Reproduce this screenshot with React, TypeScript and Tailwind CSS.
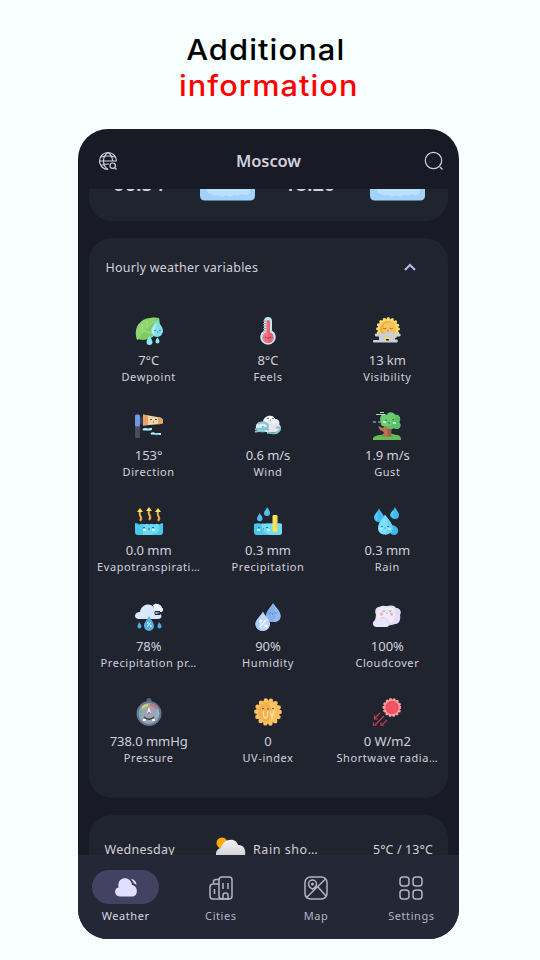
import React from "react";

const Dewpoint = () => (
  <>
    <path d="M2 23C-2 12 4 2 15 1c4-.7 7-.3 9 0 2 8 0 16-8 20-5 2.500-10 1.500-12 1z" fill="#8fd56f" />
    <path d="M2 22C7 13 13 7 23 1c2 9-2 17-9 20-4 2-8 2-11 1z" fill="#7fca62" />
    <path d="M2 22C8 14 13 9 20 4M8 15l-1-8M12 11V4M9 14l8 2" fill="none" stroke="#a9e283" strokeWidth="1" />
    <path d="M22 2.500c2 4 6 7 6 11.500a6 6 0 0 1-12 0c0-4 4-7 6-11.500z" fill="#80dfec" />
    <path d="M21 6c-2 3-4 5-4 8 0 2 1 3 2 4z" fill="#b0f1f4" />
    <path d="M14.500 19c1 2 3 4 3 6a3 3 0 0 1-6 0c0-2 2-4 3-6zM22.500 20.500c1 1.500 2 2.500 2 4a2 2 0 0 1-4 0c0-1.500 1-2.500 2-4z" fill="#8ce9f3" />
    <path d="M19 13l1 .7 1-.4M24 13l1 .7 1-.7M22 15h1.500" fill="none" stroke="#37646e" strokeWidth=".8" />
  </>
);
const Feels = () => (
  <>
    <path d="M10 4a4 4 0 0 1 8 0v9.500a7.700 7.700 0 1 1-8 0z" fill="#c1e5ef" />
    <path d="M12.500 4a2 2 0 0 1 3.500 0v12.500h-3.500z" fill="#eb6471" />
    <circle cx="14" cy="20.500" r="5.500" fill="#f36e80" />
    <path d="M14 15a5.500 5.500 0 0 1 0 11z" fill="#e65f74" />
    <path d="M9 4h3M9 6.500h3M9 9h3M9 11.500h3M9 14h3" stroke="#8b9ba8" strokeWidth="1" />
    <path d="M11 20l1.200.5M15.800 20.500L17 20M13 21h2" stroke="#62323e" strokeWidth=".9" />
  </>
);
const Visibility = () => (
  <>
    <circle cx="15" cy="12" r="10.500" fill="#f8db63" stroke="#f8dc68" strokeWidth="3" strokeLinecap="round" strokeDasharray="0 4.123" />
    <circle cx="15" cy="12" r="8" fill="#f0a850" />
    <circle cx="16.200" cy="12" r="6.800" fill="#fac45e" />
    <path d="M10 11l2 1 1.500-1M16.500 11l2 1 1.500-1M14 14h2" fill="none" stroke="#99632c" strokeWidth=".9" />
    <path d="M3 16.500h10c-1-2 5-3 6 0h7.500c1.500 0 1.500 3 0 3H22v3h2c1 0 1 3 0 3H1c-1.500 0-1.500-2.500 0-2.500h5v-3.500H3c-1.500 0-1.500-3 0-3z" fill="#c7cfdf" />
    <path d="M12 20h5v3.500h-5z" fill="#f8d958" />
    <path d="M13 22h3v1.500h-3z" fill="#292a34" />
  </>
);
const Direction = () => (
  <>
    <rect y="3" width="5" height="23" rx="1.500" fill="#484c62" />
    <rect y="2.500" width="5" height="12" rx="1.500" fill="#7397df" />
    <path d="M5 5l3-1v9l-3-1z" fill="#343c5d" />
    <path d="M8 2.500l17 3c4 1 4 6 1 6.500L8 13.500z" fill="#f1d6a8" />
    <path d="M8 2.500l5 1v9.500l-5 .5zM23 5.200l2 .3c4 1 4 6 1 6.500l-3 .3z" fill="#e9a06a" />
    <path d="M15 8l1-1 1 1M20 8l1-1 1 1M18 10h1" fill="none" stroke="#513d36" strokeWidth=".9" />
    <path d="M8 18c3-3 4 1 7-1h2M16 22c3-2 4 1 6 0h4" fill="none" stroke="#b7eefa" strokeWidth="2" />
    <path d="M9 18.500h7M18 22.500h6" stroke="#4ca6d3" strokeWidth=".7" />
  </>
);
const Wind = () => (
  <>
    <path d="M2 16c-1-4 3-7 7-6 0-6 9-9 12-3 4 0 5 4 4 5 4 4 1 8-3 8H7c-3 0-5-2-5-4z" fill="#e4e8ed" />
    <path d="M10 9c2-5 8-8 11-2 4 0 5 4 4 5-4-1-9 1-15-3z" fill="#f0f2f5" />
    <path d="M13 6l1 .7 1-.7M18 6l1 .7 1-.7M16 8h1" fill="none" stroke="#4c4e59" strokeWidth=".8" />
    <path d="M4 12c4-3 10-1 10 2 0 3-6 3-5 0M1 17.500c5-2 9 0 14 0M1 20c4-2 7 0 10-1M13 21c4-1 8 2 11-1 4-3 1-6-2-4" fill="none" stroke="#7bc4d0" strokeWidth="1.900" />
  </>
);
const Gust = () => (
  <>
    <path d="M0 28v-2c2-3 8-3 12-4 5-1 8 0 11 1 4 0 5 2 5 5z" fill="#61be52" />
    <path d="M5 14l5 2 3-5h6l-1 12 2 2H9l2-5-4-2z" fill="#b77354" />
    <path d="M14 15l4-4v13h-3z" fill="#a0604a" />
    <path d="M8 10C5 5 10 0 14 3c1-4 7-3 8 0 4-1 7 4 4 7 4 4-1 9-5 6-3 2-7 1-8-2-4 1-6-1-5-4z" fill="#6bcd72" />
    <path d="M22 3c4-1 7 4 4 7 4 4-1 9-5 6-3 2-7 1-8-2 6 1 10-3 9-11z" fill="#5bbf69" />
    <path d="M12 8l2 .5M19 8l2-.5M15 11h2" stroke="#26683f" strokeWidth=".9" />
    <path d="M3 2.500h9M7 .5h4M0 10h3M5 10h3" stroke="#cce6dd" strokeWidth=".9" />
    <path d="M10 10h3M20 11h3" stroke="#d4fff1" strokeWidth="1.400" />
  </>
);
const Evapo = () => (
  <>
    <path d="M5 14c4-4-2-4 0-9M14 13c4-4-2-5 0-9M23 14c4-4-2-4 0-9" fill="none" stroke="#d69c32" strokeWidth="2.200" />
    <path d="M5 13c3-3-2-4 0-8M14 12c3-3-2-4 0-8M23 13c3-3-2-4 0-8" fill="none" stroke="#fac94b" strokeWidth="1" />
    <path d="M2 5l3-4 3 4zM11 4l3-4 3 4zM20 5l3-4 3 4z" fill="#fae253" />
    <path d="M0 16q3 0 4 1.500 3-1.500 5 0 3-1.500 5 0 3-1.500 5 0 3-1.500 5 0 2-1.500 4-1.500v9c0 2-1 3-3 3H3c-2 0-3-1-3-3z" fill="#4bc8ee" />
    <path d="M8 17.500q3-.5 6 0 3-1 5 0 3-1 5 0v6c-2 4-6 2-7 4.500H8z" fill="#6cdaf6" />
    <path d="M8 20l1 1 1-1M17 20l1 1 1-1M13 22h2" fill="none" stroke="#28617b" strokeWidth=".9" />
    <path d="M8 23h3M17 23h3" stroke="#d8ffff" strokeWidth="2" />
  </>
);
const Precip = () => (
  <>
    <path d="M0 17q3-1 6-.5t6 0 6 0 6 0 4 .5v8c0 2-1 3-3 3H3c-2 0-3-1-3-3z" fill="#48c7ed" />
    <path d="M8 16.500q5 .5 10 0t10 .5v8c0 2-1 3-3 3h-9c-6-2-9-5-8-11.500z" fill="#73dcf3" />
    <rect x="18.500" y="8" width="5" height="17" rx="1" fill="#f5e458" />
    <path d="M21.500 11h2M21.500 14h2M21.500 17h2M21.500 20h2" stroke="#dbb94d" strokeWidth=".7" />
    <path d="M13 0c2 3 3 4 3 6a3 3 0 0 1-6 0c0-2 2-3 3-6zM5.500 6c2 3 3 4 3 5.500a2.700 2.700 0 0 1-5.500 0C3 9.500 5 8 5.500 6z" fill="#4dbff0" />
    <path d="M4 20l1 1 1-1M12 20l1 1 1-1M9 22h1" fill="none" stroke="#28728c" strokeWidth=".9" />
    <path d="M3 23h3M13 23h3" stroke="#ddfff9" strokeWidth="1.500" />
  </>
);
const Rain = () => (
  <>
    <path d="M6 1c1 4 5 6 5 9s-2 5-5 5-5-2-5-5 4-5 5-9zM22 0c1 3 4 5 4 8s-2 4-4 4-5-2-5-4 4-5 5-8zM19 18c4 1 7 3 6 7-1 4-7 4-8 0z" fill="#40b9eb" />
    <path d="M4.500 6c-2 3-2 5 0 7M20.500 4c-2 3-2 4 0 6" fill="none" stroke="#59cbf2" strokeWidth="2" />
    <path d="M12 7.500c2 4 7.500 8 7.500 13.500 0 4-3 6.500-7.500 6.500S5 25 5 21C5 15 10 12 12 7.500z" fill="#7edff8" />
    <path d="M12 7.500c2 4 7.500 8 7.500 13.500 0 4-3 6.500-7.500 6.500 4-6 3-13 0-20z" fill="#6cd2f3" />
    <path d="M8 19l1 1 1-1M14 19l1 1 1-1M11.500 21h1" fill="none" stroke="#30687e" strokeWidth=".8" />
    <path d="M6.500 22h3M15 22h3" stroke="#cfffff" />
  </>
);
const Probability = () => (
  <>
    <path d="M4 16c-6 0-5-7 1-7 1-8 11-10 14-4 1-5 7-5 8 0 2 1 1 4-1 4l-6 1 5 1c3 2 1 5-2 5z" fill="#dae8ff" />
    <path d="M18 2.500c1-3 7-2 8 2 4 1 2 4 0 4h-6z" fill="#eaf2ff" />
    <path d="M20 8.500h5M20 8.500v3h5" fill="none" stroke="#20242f" strokeWidth="1" />
    <path d="M14 13c2 4 5 6 5 10a5 5 0 0 1-10 0c0-4 3-6 5-10z" fill="#56aee9" />
    <path d="M4 19c2 3 2.500 3 2.500 4.500a2 2 0 0 1-4 0C2.500 22 3.500 21 4 19zM24 19c2 3 2.500 3 2.500 4.500a2 2 0 0 1-4 0c0-1.500 1-2.500 1.500-4.500z" fill="#50abe5" />
    <path d="M12 24l4-5" stroke="white" strokeWidth="1" />
    <path d="M12 20h1.500M15 23h1.500" stroke="white" strokeWidth="1.500" />
  </>
);
const Humidity = () => (
  <>
    <path d="M19 0c3 5 7.500 8 7.500 13 0 4-3 6-7.500 6s-7-2-7-6c0-5 4-8 7-13z" fill="#86aee8" />
    <path d="M19 0c3 5 7.500 8 7.500 13 0 4-3 6-7.500 6 4-6 3-12 0-19z" fill="#94bbf2" />
    <path d="M9 8.500c2 5 7 7.500 7 12.500 0 4-3 7-7 7s-7.500-3-7.500-7C1.500 16 7 13.500 9 8.500z" fill="#bcd9ff" />
    <path d="M9 8.500C7 13.500 5 17 5 22c0 3 2 5 4 6-4 0-7.500-3-7.500-7 0-5 5.500-7.500 7.500-12.500z" fill="#a6cdfb" />
    <path d="M14.500 9.500l1 1 1-1M21 9.500l1 1 1-1M18 11h1" fill="none" stroke="#46597b" strokeWidth=".7" />
    <path d="M6 24l6-7" stroke="white" strokeWidth="1.500" />
    <circle cx="6.500" cy="18" r="1.500" fill="white" />
    <circle cx="12" cy="23" r="1.500" fill="white" />
  </>
);
const Clouds = () => (
  <>
    <path d="M3 12C1 8 3 4 6 4c3-2 6-1 8-1 3-1 8-1 9 2 4 0 6 4 4 7 1 5-1 9-5 9-4 2-12 2-16-1-3-2-4-5-3-8z" fill="#e4dcf7" />
    <path d="M5 7c2-4 6-3 8-2 5-2 8 0 9 4 1 5-1 9-4 11H7C3 17 3 11 5 7z" fill="#f0ebfa" />
    <path d="M2 17c0-3 4-4 7-2 3-1 5 1 5 3 3 1 3 5 0 6H3c-4-1-4-5-1-7z" fill="#e9e5fc" />
    <path d="M8 15c3-1 6 0 6 3 2 1 3 3 1 5" fill="none" stroke="#cfc7ea" strokeWidth=".8" />
    <path d="M10 7.500l1 1 1-1M16 7.500l1 1 1-1M13.500 10h1" fill="none" stroke="#514a60" strokeWidth=".8" />
    <circle cx="8.500" cy="11" r="1.700" fill="#f5b0b4" />
    <circle cx="18.500" cy="11" r="1.700" fill="#f5b0b4" />
  </>
);
const Pressure = () => (
  <>
    <circle cx="14" cy="2.500" r="2.500" fill="#59637d" />
    <circle cx="14" cy="15.500" r="12.500" fill="#67758f" />
    <circle cx="14" cy="15.500" r="10.500" fill="#9ca5b3" />
    <path d="M6 19a8 8 0 0 1 0-7" fill="none" stroke="#57bbaa" strokeWidth="1.800" />
    <path d="M7 10q3-3 6-3" fill="none" stroke="#e2d657" strokeWidth="1.800" />
    <path d="M15 7q5 0 6.500 4" fill="none" stroke="#dd6977" strokeWidth="1.800" />
    <path d="M22.500 12q1 3 0 7" fill="none" stroke="#83bfd5" strokeWidth="1.800" />
    <path d="M14 9l2 6h-4z" fill="#e8f4fa" />
    <circle cx="14" cy="15" r="1.300" fill="#de6874" />
    <path d="M9 19c3 2.500 7 2.500 10 0M13 21.500h2" stroke="#343b48" strokeWidth="1.200" fill="none" />
    <path d="M8 22h3M17 22h3" stroke="#f0f5ff" strokeWidth="2" />
  </>
);
const Uv = () => (
  <>
    <circle cx="14" cy="14" r="11.700" fill="#f8bb59" stroke="#fbc25f" strokeWidth="4.400" strokeLinecap="round" strokeDasharray="0 5.251" />
    <circle cx="14" cy="14" r="9.800" fill="#f3af50" />
    <path d="M14 4.200a9.800 9.800 0 0 1 0 19.600q7-10 0-19.600z" fill="#fbc564" />
    <path d="M9.500 13v4q0 3 2 3 2 0 2-3v-4M16 13l2 7 2-7" fill="none" stroke="#fde0a0" strokeWidth="1.300" />
    <path d="M8 10l1 1 1-1M18 10l1 1 1-1M13 11h2" fill="none" stroke="#78502c" strokeWidth=".9" />
  </>
);
const Radiation = () => (
  <>
    <circle cx="19" cy="9.500" r="8" fill="#f79397" stroke="#f8a0a2" strokeWidth="3.200" strokeLinecap="round" strokeDasharray="0 3.590" />
    <circle cx="19" cy="9.500" r="6.700" fill="#f05262" />
    <path d="M16 6l6 6M19 5l4 4" stroke="#ee6472" strokeWidth=".8" />
    <path d="M7 15l-5 5M11 18l-9 9M14 22l-5 5" stroke="#c63f52" strokeWidth="1.100" />
    <path d="M1.500 17.500v3.500H5M.500 24.500V28H4M8 24.500V28h3.500" fill="none" stroke="#d44357" strokeWidth="1.100" />
  </>
);

const metrics: { value: string; label: string; icon: React.FC }[] = [
  { value: "7°C", label: "Dewpoint", icon: Dewpoint },
  { value: "8°C", label: "Feels", icon: Feels },
  { value: "13 km", label: "Visibility", icon: Visibility },
  { value: "153°", label: "Direction", icon: Direction },
  { value: "0.6 m/s", label: "Wind", icon: Wind },
  { value: "1.9 m/s", label: "Gust", icon: Gust },
  { value: "0.0 mm", label: "Evapotranspirati…", icon: Evapo },
  { value: "0.3 mm", label: "Precipitation", icon: Precip },
  { value: "0.3 mm", label: "Rain", icon: Rain },
  { value: "78%", label: "Precipitation pr…", icon: Probability },
  { value: "90%", label: "Humidity", icon: Humidity },
  { value: "100%", label: "Cloudcover", icon: Clouds },
  { value: "738.0 mmHg", label: "Pressure", icon: Pressure },
  { value: "0", label: "UV-index", icon: Uv },
  { value: "0 W/m2", label: "Shortwave radia…", icon: Radiation },
];

const WeatherIcon = () => (
  <>
    <path d="M6 21.500c-6 0-6.500-8-1.500-9C2.500 1 17 0 18 10c6 .5 7 11.500 0 11.500z" fill="#e1dfff" />
    <path d="M17 4.200c3 0 5.500 2 5.500 5.600-1-.4-1.600-1.100-2.600-1.500-.6-1.700-1.500-2.900-2.900-4.100z" fill="#e1dfff" />
  </>
);
const CitiesIcon = () => (
  <>
    <rect x="10" y="1" width="13" height="22" rx="3" />
    <path d="M10 8H4Q1 8 1 11v9q0 3 3 3h16M4.500 8V6q0-2.500 2.500-2.500h3M5.500 13v5M14 7v6M19 7v6M14 23v-4q0-2 2.500-2t2.500 2v4" />
  </>
);
const MapIcon = () => (
  <>
    <rect x="1" y="1" width="22" height="22" rx="5.500" />
    <path d="M2 22L21.500 3M14 11l8 9M8.500 13c-2-1-4-3-4-5a4 4 0 0 1 8 0c0 2-2 4-4 5z" />
    <circle cx="8.500" cy="8" r=".8" />
  </>
);
const SettingsIcon = () => (
  <>
    <rect x="1" y="1" width="9" height="9" rx="3" />
    <rect x="14" y="1" width="9" height="9" rx="3" />
    <rect x="1" y="14" width="9" height="9" rx="3" />
    <rect x="14" y="14" width="9" height="9" rx="3" />
  </>
);

const tabs: { label: string; icon: React.FC }[] = [
  { label: "Weather", icon: WeatherIcon },
  { label: "Cities", icon: CitiesIcon },
  { label: "Map", icon: MapIcon },
  { label: "Settings", icon: SettingsIcon },
];

const Wave = () => (
  <svg viewBox="0 0 55 12" className="h-3 w-[55px]">
    <path d="M0 0h55v6.500q0 5-5 5H5q-5 0-5-5z" fill="#a1d2fb" />
    <path d="M7 0h43v4q-4 4-8 1-4 3-8 1-4 3-8 0-4 3-8 0-4 2-7-1-4 0-4-5z" fill="#bddfff" />
  </svg>
);

export default function App() {
  return (
    <div className="flex h-[960px] w-[540px] flex-col bg-[#f7ffff] font-['Noto_Sans',sans-serif]">
      <h1 className="flex h-[129px] shrink-0 flex-col items-center pt-8 pr-[3px] text-center font-['Inter',sans-serif] text-[29px] leading-9 font-[450] tracking-[1px] text-black">
        <span className="-ml-[6px] scale-x-[1.065]">Additional</span>
        <span className="scale-x-[1.060] text-[#ff0000]">information</span>
      </h1>
      <main className="ml-[78px] flex h-[810px] w-[381px] flex-col overflow-hidden rounded-[30px] bg-[#181a26] text-[#d2d0dc]">
        <header className="flex h-[60px] shrink-0 items-center justify-between pt-[3px] pr-[15px] pl-5">
          <svg viewBox="0 0 20 20" className="size-5" fill="none" stroke="#d2d1dd" strokeWidth="1.200">
            <path d="M18.500 10A8.500 8.500 0 1 0 10 18.500M10 1.500c-6 4-6 13 0 17M10 1.500c3 2 4.500 5 4.500 8.500M3 6q7-2 14 0M1.500 10h17M3 14q4-1 8-1" />
            <circle cx="14.700" cy="14.700" r="2.700" />
            <path d="M17 17l1.500 1.500" />
          </svg>
          <h2 className="mt-px mr-[5px] text-[16.500px] font-semibold tracking-[-0.100px]">Moscow</h2>
          <svg viewBox="0 0 20 20" className="size-5" fill="none" stroke="#d2d1dd" strokeWidth="1.200">
            <circle cx="9.500" cy="9.500" r="8.200" />
            <path d="M16 16l2.500 2.500" />
          </svg>
        </header>
        <div className="flex h-[666px] shrink-0 flex-col overflow-hidden px-[11px]">
          <section className="flex h-8 shrink-0 items-start rounded-b-[23px] bg-[#20242f] pl-6 text-[20px] font-semibold">
            <span className="-mt-[19px] w-[87px] leading-7">06:54</span>
            <Wave />
            <span className="-mt-[19px] ml-[29px] w-[86px] leading-7">18:20</span>
            <Wave />
          </section>
          <section className="mt-[17px] h-[560px] shrink-0 rounded-[23px] bg-[#20242f]">
            <div className="flex h-[79px] items-start justify-between pt-5 pr-8 pl-[16.500px]">
              <h3 className="text-[12.500px] leading-5 tracking-[0.240px]">Hourly weather variables</h3>
              <svg viewBox="0 0 12 8" className="mt-[5px] h-2 w-3" fill="none" stroke="#b1bbf5" strokeWidth="2">
                <path d="M1 7l5-5 5 5" />
              </svg>
            </div>
            <div className="mr-[1px] grid auto-rows-[95.200px] grid-cols-3">
              {metrics.map(({ value, label, icon: Icon }) => (
                <div key={label} className="flex flex-col items-center">
                  <svg viewBox="0 0 28 28" className="size-7 shrink-0"><Icon /></svg>
                  <span className="mt-[6px] text-[13px] leading-[18px] tracking-[-0.050px]">{value}</span>
                  <span className="text-[11px] leading-4 tracking-[0.580px] whitespace-nowrap">{label}</span>
                </div>
              ))}
            </div>
          </section>
          <section className="mt-[17px] flex h-[71px] shrink-0 items-center rounded-t-[23px] bg-[#20242f] pr-[15px] pl-[15.500px] text-[12.500px]">
            <span className="w-[111.500px] tracking-[0.280px]">Wednesday</span>
            <svg viewBox="0 0 30 28" className="h-7 w-[30px]">
              <defs>
                <linearGradient id="cloud" x2="0" y2="1">
                  <stop stopColor="#f2f2f2" />
                  <stop offset="1" stopColor="#c8cace" />
                </linearGradient>
              </defs>
              <circle cx="6" cy="6" r="5.500" fill="#ffab0b" />
              <path d="M6 24c-8-1-8-12-1-13C7 1 20 0 22 8c9-1 10 14 1 16z" fill="url(#cloud)" />
            </svg>
            <span className="ml-[7px] tracking-[0.550px]">Rain sho…</span>
            <span className="ml-auto tracking-[0.100px]">5°C / 13°C</span>
          </section>
        </div>
        <nav className="grid h-[84px] shrink-0 grid-cols-4 bg-[#242736] pt-[15px]">
          {tabs.map(({ label, icon: Icon }, index) => (
            <div key={label} className="flex flex-col items-center text-[#b4b3c2] first:text-[#d8d6e2]">
              <div className={index === 0 ? "flex h-[34px] w-[67px] items-center justify-center rounded-full bg-[#444263]" : "flex h-[34px] items-center justify-center pt-[2px]"}>
                <svg viewBox="0 0 24 24" className="size-6" fill="none" stroke={index === 0 ? "none" : "currentColor"} strokeWidth="1.500"><Icon /></svg>
              </div>
              <span className="mt-1 text-[11px] leading-4 tracking-[0.580px]">{label}</span>
            </div>
          ))}
        </nav>
      </main>
    </div>
  );
}
